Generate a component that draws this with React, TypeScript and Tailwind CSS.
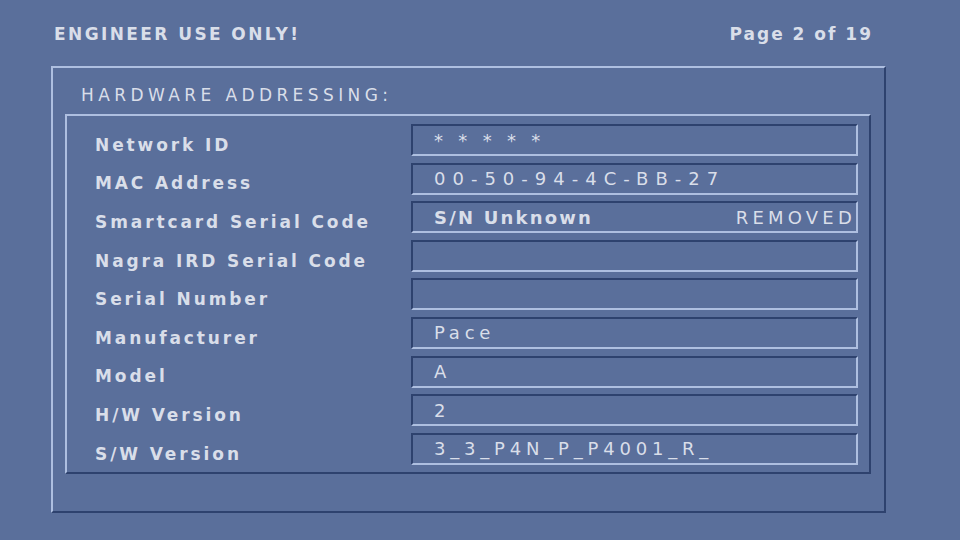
import React from 'react';

type Row = { label: string; value?: string; extra?: string; bold?: boolean; wide?: boolean };

const rows: Row[] = [
    { label: 'Network ID', value: '* * * * *' },
    { label: 'MAC Address', value: '00-50-94-4C-BB-27', wide: true },
    { label: 'Smartcard Serial Code', value: 'S/N Unknown', extra: 'REMOVED', bold: true },
    { label: 'Nagra IRD Serial Code' },
    { label: 'Serial Number' },
    { label: 'Manufacturer', value: 'Pace' },
    { label: 'Model', value: 'A' },
    { label: 'H/W Version', value: '2' },
    { label: 'S/W Version', value: '3_3_P4N_P_P4001_R_' },
];

const font = { fontFamily: '"DejaVu Sans", Verdana, sans-serif' };

const valueClass = (r: Row) =>
    r.bold
        ? 'text-[18px] font-bold tracking-[2.2px]'
        : r.wide
          ? 'text-[18px] tracking-[7px]'
          : 'text-[18px] tracking-[4.8px]';

const App: React.FC = () => {
    return (
        <div
            className="w-[960px] h-[540px] bg-[#5a6f9b] text-[#d9dee9] overflow-hidden flex flex-col"
            style={font}
        >
            {/* Header */}
            <div className="flex justify-between items-center h-[66px] pl-[54px] pr-[87px] pt-[3px]">
                <span className="text-[17px] font-bold tracking-[2.4px]">ENGINEER USE ONLY!</span>
                <span className="text-[17px] font-bold tracking-[2px]">Page 2 of 19</span>
            </div>

            {/* Outer raised panel */}
            <div className="ml-[51px] w-[835px] h-[447px] border-2 border-t-[#aebfe0] border-l-[#aebfe0] border-r-[#2e426e] border-b-[#2e426e] flex flex-col">
                <div className="h-[46px] pl-[28px] flex items-center pt-[10px]">
                    <span className="text-[17px] tracking-[4.4px]">HARDWARE ADDRESSING:</span>
                </div>

                {/* Inner raised panel */}
                <div className="ml-[12px] w-[806px] h-[360px] border-2 border-t-[#aebfe0] border-l-[#aebfe0] border-r-[#2e426e] border-b-[#2e426e] pt-[8px] pl-[28px] pr-[11px] flex flex-col gap-[6.6px]">
                    {rows.map((r) => (
                        <div key={r.label} className="flex items-center h-[32px]">
                            <span className="w-[316px] pt-[11px] text-[17px] font-bold tracking-[2.9px]">{r.label}</span>
                            <div className="flex-1 h-[32px] border-2 border-t-[#2e426e] border-l-[#2e426e] border-r-[#aebfe0] border-b-[#aebfe0] flex items-center justify-between pl-[21px]">
                                <span className={valueClass(r)}>{r.value}</span>
                                {r.extra && <span className="text-[18px] tracking-[4.2px]">{r.extra}</span>}
                            </div>
                        </div>
                    ))}
                </div>
            </div>
        </div>
    );
};

export default App;
